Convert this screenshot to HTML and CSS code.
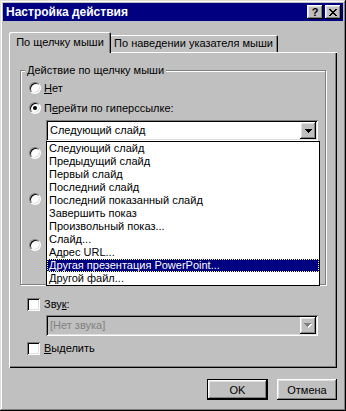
FILE: index.html
```html
<!DOCTYPE html>
<html lang="ru">
<head>
  <meta charset="UTF-8">
  <meta name="viewport" content="width=device-width, initial-scale=1.0">
  <title>Настройка действия</title>
  <link rel="stylesheet" href="styles.css">
</head>
<body>

  <div class="window">
    <div class="titlebar">
      <span class="title">Настройка действия</span>
      <div class="title-buttons">
        <span class="tbtn raised help">?</span>
        <span class="tbtn raised">
          <svg width="8" height="7" viewBox="0 0 8 7" shape-rendering="crispEdges">
            <path d="M0 0h2v1h-2z M6 0h2v1h-2z M1 1h2v1h-2z M5 1h2v1h-2z M2 2h4v1h-4z M3 3h2v1h-2z M2 4h4v1h-4z M1 5h2v1h-2z M5 5h2v1h-2z M0 6h2v1h-2z M6 6h2v1h-2z"/>
          </svg>
        </span>
      </div>
    </div>

    <div class="content">
      <div class="tabs">
        <div class="tab active">По щелчку мыши</div>
        <div class="tab">По наведении указателя мыши</div>
      </div>

      <div class="panel">
        <fieldset class="group">
          <legend>Действие по щелчку мыши</legend>

          <div class="opt"><span class="radio"></span><span><u>Н</u>ет</span></div>
          <div class="opt"><span class="radio checked"></span><span>П<u>е</u>рейти по гиперссылке:</span></div>

          <div class="combo">
            <span class="combo-text">Следующий слайд</span>
            <span class="combo-btn raised">
              <svg width="7" height="4" viewBox="0 0 7 4" shape-rendering="crispEdges"><path d="M0 0h7v1h-1v1h-1v1h-1v1h-1v-1h-1v-1h-1v-1h-1z"/></svg>
            </span>
            <div class="droplist">
              <div class="item">Следующий слайд</div>
              <div class="item">Предыдущий слайд</div>
              <div class="item">Первый слайд</div>
              <div class="item">Последний слайд</div>
              <div class="item">Последний показанный слайд</div>
              <div class="item">Завершить показ</div>
              <div class="item">Произвольный показ...</div>
              <div class="item">Слайд...</div>
              <div class="item">Адрес URL...</div>
              <div class="item selected">Другая презентация PowerPoint...</div>
              <div class="item">Другой файл...</div>
            </div>
          </div>

          <!-- these rows sit under the open list; only their radios peek out -->
          <div class="opt gap2"><span class="radio"></span></div>
          <div class="field"></div>
          <div class="opt gap3"><span class="radio"></span></div>
          <div class="field"></div>
          <div class="opt gap3"><span class="radio"></span></div>
          <div class="field"></div>
        </fieldset>

        <div class="check-row sound"><span class="checkbox"></span><span>Зву<u>к</u>:</span></div>
        <div class="combo disabled">
          <span class="combo-text">[Нет звука]</span>
          <span class="combo-btn raised">
            <svg width="8" height="5" viewBox="0 0 8 5" shape-rendering="crispEdges"><path class="hl" d="M1 1h7v1h-1v1h-1v1h-1v1h-1v-1h-1v-1h-1v-1h-1z"/><path d="M0 0h7v1h-1v1h-1v1h-1v1h-1v-1h-1v-1h-1v-1h-1z"/></svg>
          </span>
        </div>
        <div class="check-row highlight"><span class="checkbox"></span><span><u>В</u>ыделить</span></div>
      </div>

      <div class="actions">
        <button type="button" class="btn default">OK</button>
        <button type="button" class="btn">Отмена</button>
      </div>
    </div>
  </div>

</body>
</html>
```

FILE: styles.css
```css
* {
  box-sizing: border-box;
}
body {
  margin: 0;
  background-color: #c0c0c0;
  font-family: "Liberation Sans", Arial, sans-serif;
  font-size: 11px;
  color: #000;
}
u {
  text-decoration: underline;
  text-underline-offset: 1px;
}
.raised {
  background-color: #c0c0c0;
  box-shadow: inset -1px -1px #000, inset 1px 1px #fff, inset -2px -2px #808080, inset 2px 2px #dfdfdf;
}
.window {
  width: 346px;
  height: 411px;
  padding: 3px;
  background-color: #c0c0c0;
  box-shadow: inset -1px -1px #000, inset 1px 1px #dfdfdf, inset -2px -2px #808080, inset 2px 2px #fff;
  display: flex;
  flex-direction: column;
}
.titlebar {
  height: 18px;
  background-color: #000080;
  display: flex;
  align-items: center;
  justify-content: space-between;
  padding: 0 2px 0 3px;
}
.title {
  color: #fff;
  font-weight: bold;
  font-size: 12px;
}
.title-buttons {
  display: flex;
  gap: 2px;
}
.tbtn {
  width: 16px;
  height: 14px;
  display: flex;
  align-items: center;
  justify-content: center;
}
.tbtn.help {
  font-weight: bold;
  font-size: 11px;
  line-height: 14px;
}
.content {
  padding: 11px 6px 0;
}
.tabs {
  display: flex;
  align-items: flex-end;
  height: 20px;
}
.tab {
  height: 17px;
  width: 169px;
  padding-top: 2px;
  line-height: 13px;
  text-align: center;
  white-space: nowrap;
  border-radius: 2px 2px 0 0;
  background-color: #c0c0c0;
  box-shadow: inset 1px 1px #fff, inset -1px 0 #000, inset -2px 0 #808080;
}
.tab.active {
  position: relative;
  z-index: 1;
  width: 102px;
  height: 21px;
  margin-bottom: -1px;
  margin-right: -2px;
  padding-top: 4px;
}
.panel {
  height: 316px;
  padding: 12px 10px 0 11px;
  box-shadow: inset 1px 1px #fff, inset -1px -1px #000, inset -2px -2px #808080;
}
.group {
  margin: 0;
  padding: 1px 0 6px 8px;
  min-width: 0;
  border: 1px solid #808080;
  box-shadow: inset 1px 1px #fff, 1px 1px #fff;
  width: 306px;
}
.group legend {
  padding: 0 2px;
  margin-left: -4px;
  line-height: 13px;
  background-color: #c0c0c0;
}
.opt {
  display: flex;
  align-items: center;
  gap: 3px;
  height: 20px;
}
.opt.gap2 {
  margin-top: 2px;
}
.opt.gap3 {
  margin-top: 3px;
}
.radio {
  width: 12px;
  height: 12px;
  border-radius: 50%;
  background-color: #fff;
  border: 1px solid;
  border-color: #808080 #fff #fff #808080;
  box-shadow: inset 1px 1px #000, inset -1px -1px #dfdfdf;
  display: flex;
  align-items: center;
  justify-content: center;
}
.radio.checked::after {
  content: "";
  width: 4px;
  height: 4px;
  border-radius: 50%;
  background-color: #000;
}
.checkbox {
  width: 13px;
  height: 13px;
  background-color: #fff;
  box-shadow: inset 1px 1px #808080, inset -1px -1px #fff, inset 2px 2px #000, inset -2px -2px #dfdfdf;
}
.combo,
.field {
  position: relative;
  display: flex;
  width: 272px;
  height: 21px;
  margin: 2px 0 0 17px;
  padding: 2px;
  background-color: #fff;
  box-shadow: inset 1px 1px #808080, inset -1px -1px #fff, inset 2px 2px #000, inset -2px -2px #dfdfdf;
}
.combo-text {
  flex: 1;
  padding-left: 2px;
  line-height: 17px;
  white-space: nowrap;
}
.combo-btn {
  width: 16px;
  height: 17px;
  display: flex;
  align-items: center;
  justify-content: center;
}
.combo.disabled {
  background-color: #c0c0c0;
  margin: 2px 0 0 26px;
}
.combo.disabled .combo-text {
  color: #808080;
}
.combo.disabled svg {
  fill: #808080;
}
.combo.disabled svg .hl {
  fill: #fff;
}
.droplist {
  position: absolute;
  left: 0;
  top: 100%;
  z-index: 2;
  width: 274px;
  height: 145px;
  border: 1px solid #000;
  background-color: #fff;
}
.item {
  height: 13px;
  line-height: 13px;
  padding-left: 2px;
  white-space: nowrap;
}
.item.selected {
  background-color: #000080;
  color: #fff;
  outline: 1px dotted #ffff80;
  outline-offset: -1px;
}
.check-row {
  display: flex;
  align-items: center;
  gap: 4px;
  height: 18px;
  margin-left: 7px;
}
.check-row.sound {
  margin-top: 10px;
}
.check-row.highlight {
  margin-top: 3px;
}
.actions {
  display: flex;
  justify-content: flex-end;
  gap: 9px;
  margin-top: 11px;
}
.btn {
  width: 60px;
  height: 21px;
  border: none;
  padding: 0;
  font-family: inherit;
  font-size: 11px;
  color: #000;
  background-color: #c0c0c0;
  box-shadow: inset -1px -1px #000, inset 1px 1px #fff, inset -2px -2px #808080, inset 2px 2px #dfdfdf;
}
.btn.default {
  width: 61px;
  box-shadow: inset 0 0 0 1px #000, inset -2px -2px #000, inset 2px 2px #fff, inset -3px -3px #808080, inset 3px 3px #dfdfdf;
}
```
